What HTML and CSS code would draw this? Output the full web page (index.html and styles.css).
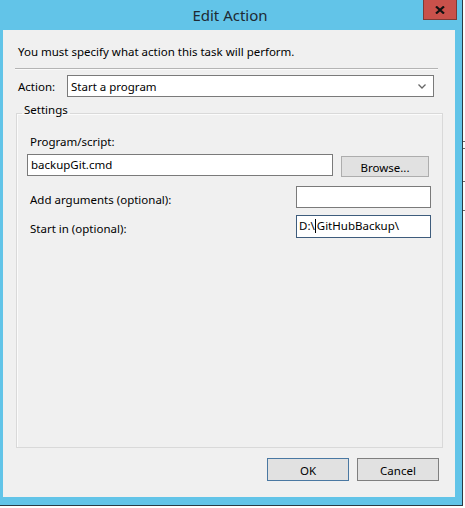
FILE: index.html
```html
<!DOCTYPE html>
<html>
<head>
<meta charset="utf-8">
<title>Edit Action</title>
<link rel="stylesheet" href="styles.css">
</head>
<body>
<div class="screen">
  <div class="window">
    <div class="titlebar">
      <span class="title">Edit Action</span>
      <div class="close">
        <svg width="10" height="8" viewBox="0 0 10 8"><path d="M1 0.5 L9 7.5 M9 0.5 L1 7.5" stroke="#111" stroke-width="2.2"/></svg>
      </div>
    </div>
    <div class="client">
      <p class="intro">You must specify what action this task will perform.</p>
      <div class="sep"></div>
      <div class="action-row">
        <span class="label">Action:</span>
        <div class="combo">
          <span>Start a program</span>
          <svg class="chev" width="8" height="5" viewBox="0 0 8 5"><path d="M0.5 0.5 L4 4 L7.5 0.5" fill="none" stroke="#666" stroke-width="1.3"/></svg>
        </div>
      </div>
      <fieldset class="group">
        <legend>Settings</legend>
        <div class="label prog-label">Program/script:</div>
        <div class="prog-row">
          <div class="textbox prog-box">backupGit.cmd</div>
          <div class="btn browse">Browse...</div>
        </div>
        <div class="opt-row">
          <span class="label">Add arguments (optional):</span>
          <div class="textbox small"></div>
        </div>
        <div class="opt-row start-row">
          <span class="label">Start in (optional):</span>
          <div class="textbox small focused">D:\<span class="caret"></span>GitHubBackup\</div>
        </div>
      </fieldset>
      <div class="buttons">
        <div class="btn ok">OK</div>
        <div class="btn cancel">Cancel</div>
      </div>
    </div>
  </div>
  <div class="behind">
    <div class="bline l1"></div>
    <div class="bline l2"></div>
    <div class="bline l3"></div>
    <div class="bline l4"></div>
  </div>
</div>
</body>
</html>
```

FILE: styles.css
```css
* { box-sizing: border-box; }
html, body { margin: 0; padding: 0; background: #ffffff; }
body {
  font-family: "Noto Sans", "Open Sans", "DejaVu Sans", sans-serif;
  font-size: 11.5px;
  color: #000;
}
.screen {
  width: 465px;
  height: 508px;
  display: flex;
  align-items: flex-start;
  overflow: hidden;
}
.window {
  position: relative;
  width: 463px;
  height: 506px;
  background: #62c4e8;
  border-right: 1px solid #2b3a44;
  border-bottom: 1px solid #2b3a44;
  padding: 0 7px 8px 3px;
  display: flex;
  flex-direction: column;
}
.titlebar {
  height: 30px;
  display: flex;
  align-items: center;
  justify-content: center;
}
.title {
  font-size: 15px;
  color: #1e2a33;
  margin-top: -1px;
  padding-left: 2px;
}
.close {
  position: absolute;
  left: 423px;
  top: 0;
  width: 34px;
  height: 20px;
  background: #c9514b;
  border: 1px solid #7e3a35;
  border-top: none;
  display: flex;
  align-items: center;
  justify-content: center;
}
.client {
  flex: 1;
  background: #f0f0f0;
  padding: 14px 16px 0 0;
  display: flex;
  flex-direction: column;
}
.intro {
  margin: 0 0 0 15px;
  line-height: 16px;
}
.sep {
  height: 1px;
  background: #b4b4b4;
  margin: 8px 1px 0 12px;
  box-shadow: 0 1px 0 #fafafa;
}
.action-row {
  display: flex;
  align-items: center;
  margin: 6px 0 0 15px;
  height: 22px;
}
.action-row .label { width: 49px; padding-top: 1px; }
.combo {
  width: 367px;
  height: 22px;
  background: #fff;
  border: 1px solid #7a7a7a;
  display: flex;
  align-items: center;
  justify-content: space-between;
  padding: 0 7px 0 3px;
}
.chev { margin-top: 1px; }
.label { line-height: 16px; }
.group {
  margin: 5px -4px 0 13px;
  padding: 10px 11px 0 10px;
  border: 1px solid #d9d9d9;
  height: 346px;
  min-width: 0;
  box-shadow: inset 1px 1px 0 #fbfbfb;
}
.group legend {
  padding: 0 2px 6px 2px;
  margin-left: -5px;
  line-height: 16px;
}
.prog-label { padding-left: 3px; }
.prog-row {
  display: flex;
  align-items: flex-start;
  margin-top: 4px;
  gap: 8px;
}
.textbox {
  height: 22px;
  background: #fff;
  border: 1px solid #7a7a7a;
  padding: 0 3px;
  line-height: 20px;
  white-space: nowrap;
}
.prog-box { width: 306px; }
.btn {
  background: #e1e1e1;
  border: 1px solid #adadad;
  display: flex;
  align-items: center;
  justify-content: center;
  padding-top: 1px;
}
.browse { width: 88px; height: 21px; margin-top: 2px; }
.opt-row {
  display: flex;
  justify-content: space-between;
  align-items: center;
  margin-top: 9px;
  padding-left: 3px;
}
.opt-row .label { padding-top: 5px; }
.start-row { margin-top: 7px; }
.start-row .textbox { height: 23px; }
.small { width: 135px; }
.focused { border-color: #3e5c7c; padding-left: 2px; }
.caret {
  display: inline-block;
  width: 1px;
  height: 14px;
  background: #000;
  vertical-align: -3px;
  margin: 0 1px 0 0;
}
.buttons {
  display: flex;
  justify-content: flex-end;
  gap: 8px;
  margin-top: 10px;
}
.ok, .cancel { width: 82px; height: 23px; }
.ok { border-color: #4a78a2; }
.cancel { border-color: #7f7f7f; }
.behind {
  flex: 1;
  height: 505px;
  background: #fbfbfb;
  display: flex;
  flex-direction: column;
}
.bline { height: 1px; background: #6b6b6b; }
.l1 { margin-top: 141px; }
.l2 { margin-top: 6px; }
.l3 { margin-top: 32px; }
.l4 { margin-top: 28px; }
```
